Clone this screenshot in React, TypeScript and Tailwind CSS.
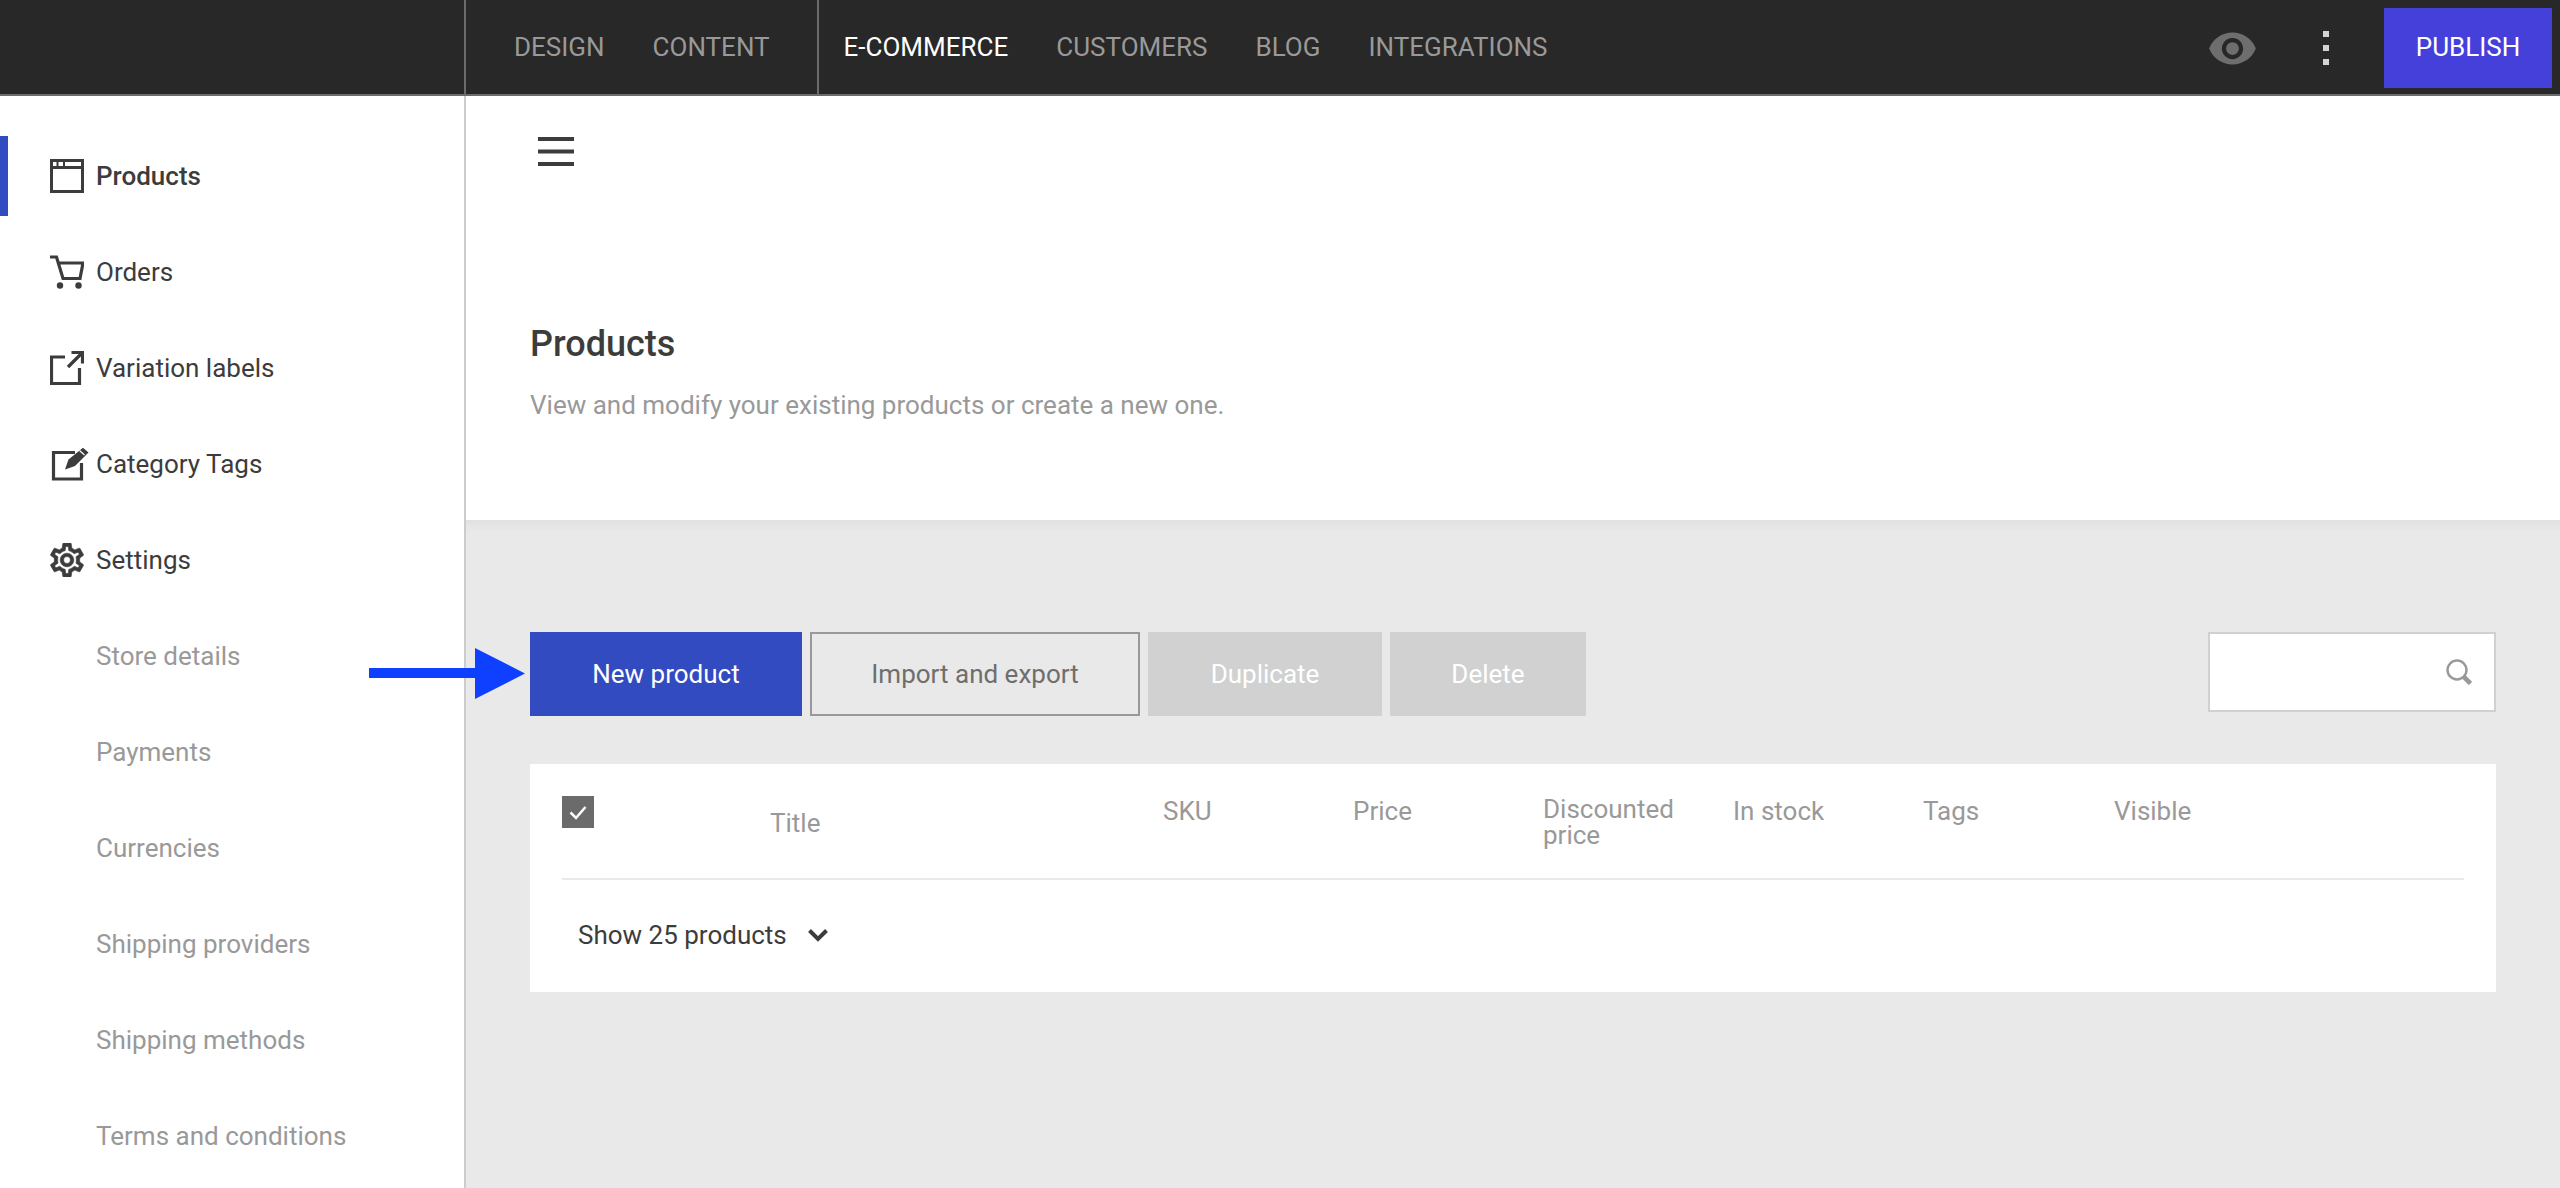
import type { ReactNode } from "react";

const WindowIcon = () => (
  <svg width="34" height="34" viewBox="0 0 34 34" fill="none" stroke="#3c3c3c" strokeWidth="3">
    <rect x="1.5" y="1.5" width="31" height="31" />
    <path d="M2 8.5h30" />
    <path d="M7.5 3v4M14 3v4" strokeWidth="2" />
  </svg>
);

const CartIcon = () => (
  <svg width="34" height="34" viewBox="0 0 34 34" fill="none" stroke="#3c3c3c" strokeWidth="3.2">
    <path d="M0 2h6.5L13 23.5h17L33 8H8.5" />
    <circle cx="10" cy="30.5" r="3.2" fill="#3c3c3c" stroke="none" />
    <circle cx="28.5" cy="30.5" r="3.2" fill="#3c3c3c" stroke="none" />
  </svg>
);

const ExternalIcon = () => (
  <svg width="34" height="34" viewBox="0 0 34 34" fill="none" stroke="#3c3c3c" strokeWidth="3.2">
    <path d="M15 6H1.5v26.5h28V17" />
    <path d="M18 16L32 2M21.5 1.5h11v11" />
  </svg>
);

const EditIcon = () => (
  <svg width="39" height="34" viewBox="-2 0 39 34" fill="none" stroke="#3c3c3c" strokeWidth="3.2">
    <path d="M23 5.5H1.5V32h28V16" />
    <polygon points="13,22.5 16.5,12.5 31,0.7 36.5,5.6 23,19" fill="#3c3c3c" stroke="none" />
    <path d="M27.5 3.5l5 4.5" stroke="#fff" strokeWidth="1.2" />
  </svg>
);

const GearIcon = () => (
  <svg width="34" height="34" viewBox="2 2 20 20" fill="#3c3c3c" stroke="#3c3c3c" strokeWidth="0.35">
    <path d="M19.43 12.98c.04-.32.07-.64.07-.98 0-.34-.03-.66-.07-.98l2.11-1.65c.19-.15.24-.42.12-.64l-2-3.46c-.09-.16-.26-.25-.44-.25-.06 0-.12.01-.17.03l-2.49 1c-.52-.4-1.08-.73-1.69-.98l-.38-2.65C14.46 2.18 14.25 2 14 2h-4c-.25 0-.46.18-.49.42l-.38 2.65c-.61.25-1.17.59-1.69.98l-2.49-1c-.06-.02-.12-.03-.18-.03-.17 0-.34.09-.43.25l-2 3.46c-.13.22-.07.49.12.64l2.11 1.65c-.04.32-.07.65-.07.98 0 .33.03.66.07.98l-2.11 1.65c-.19.15-.24.42-.12.64l2 3.46c.09.16.26.25.44.25.06 0 .12-.01.17-.03l2.49-1c.52.4 1.08.73 1.69.98l.38 2.65c.03.24.24.42.49.42h4c.25 0 .46-.18.49-.42l.38-2.65c.61-.25 1.17-.59 1.69-.98l2.49 1c.06.02.12.03.18.03.17 0 .34-.09.43-.25l2-3.46c.12-.22.07-.49-.12-.64l-2.11-1.65zm-1.98-1.71c.04.31.05.52.05.73 0 .21-.02.43-.05.73l-.14 1.13.89.7 1.08.84-.7 1.21-1.27-.51-1.04-.42-.9.68c-.43.32-.84.56-1.25.73l-1.06.43-.16 1.13-.2 1.35h-1.4l-.19-1.35-.16-1.13-1.06-.43c-.43-.18-.83-.41-1.23-.71l-.91-.7-1.06.43-1.27.51-.7-1.21 1.08-.84.89-.7-.14-1.13c-.03-.31-.05-.54-.05-.74s.02-.43.05-.73l.14-1.13-.89-.7-1.08-.84.7-1.21 1.27.51 1.04.42.9-.68c.43-.32.84-.56 1.25-.73l1.06-.43.16-1.13.2-1.35h1.39l.19 1.35.16 1.13 1.06.43c.43.18.83.41 1.23.71l.91.7 1.06-.43 1.27-.51.7 1.21-1.07.85-.89.7.14 1.13zM12 8c-2.21 0-4 1.79-4 4s1.79 4 4 4 4-1.79 4-4-1.79-4-4-4zm0 6c-1.1 0-2-.9-2-2s.9-2 2-2 2 .9 2 2-.9 2-2 2z" />
  </svg>
);

const mainLinks: { label: string; icon: ReactNode; active?: boolean }[] = [
  { label: "Products", icon: <WindowIcon />, active: true },
  { label: "Orders", icon: <CartIcon /> },
  { label: "Variation labels", icon: <ExternalIcon /> },
  { label: "Category Tags", icon: <EditIcon /> },
  { label: "Settings", icon: <GearIcon /> },
];

const subLinks = [
  "Store details",
  "Payments",
  "Currencies",
  "Shipping providers",
  "Shipping methods",
  "Terms and conditions",
];

function TopBar() {
  return (
    <header className="flex h-[96px] shrink-0 border-b-2 border-[#6b6b6b] bg-[#282828] text-[26px] leading-[36px] text-[#999999]">
      <div className="w-[466px] shrink-0 border-r-2 border-[#6b6b6b]" />
      <nav className="flex items-center gap-[48px] pr-[47px] pl-[48px]">
        <span>DESIGN</span>
        <span>CONTENT</span>
      </nav>
      <nav className="flex items-center gap-[48px] border-l-2 border-[#6b6b6b] pl-[25px]">
        <span className="text-white">E-COMMERCE</span>
        <span>CUSTOMERS</span>
        <span>BLOG</span>
        <span>INTEGRATIONS</span>
      </nav>
      <div className="ml-auto flex items-center pt-[2px] pr-[8px]">
        <svg width="51" height="51" viewBox="0 0 24 24" fill="#6e6e6e">
          <path d="M12 4.5C7 4.5 2.73 7.61 1 12c1.73 4.39 6 7.5 11 7.5s9.27-3.11 11-7.5c-1.73-4.39-6-7.5-11-7.5zM12 17c-2.76 0-5-2.24-5-5s2.24-5 5-5 5 2.24 5 5-2.24 5-5 5zm0-8c-1.66 0-3 1.34-3 3s1.34 3 3 3 3-1.34 3-3-1.34-3-3-3z" />
        </svg>
        <div className="mr-[55px] ml-[65px] flex flex-col gap-[8px]">
          <span className="h-[6px] w-[6px] bg-[#d4d4d4]" />
          <span className="h-[6px] w-[6px] bg-[#d4d4d4]" />
          <span className="h-[6px] w-[6px] bg-[#d4d4d4]" />
        </div>
        <button className="h-[80px] w-[168px] bg-[#4540da] pb-[2px] text-white">PUBLISH</button>
      </div>
    </header>
  );
}

function Sidebar() {
  return (
    <aside className="w-[466px] shrink-0 border-r-2 border-[#cccccc] bg-white pt-[40px] text-[26px] leading-[36px]">
      <ul className="flex flex-col gap-[16px]">
        {mainLinks.map((link) => (
          <li
            key={link.label}
            className={`flex h-[80px] items-center border-l-[8px] pl-[42px] ${
              link.active ? "border-[#334bc1] font-medium" : "border-transparent"
            } text-[#3c3c3c]`}
          >
            <span className="flex w-[46px] shrink-0">{link.icon}</span>
            {link.label}
          </li>
        ))}
        {subLinks.map((label) => (
          <li key={label} className="flex h-[80px] items-center pl-[96px] text-[#999999]">
            {label}
          </li>
        ))}
      </ul>
    </aside>
  );
}

function ProductTable() {
  return (
    <div className="mt-[48px] bg-white px-[32px] text-[26px] leading-[26px]">
      <div className="grid h-[116px] grid-cols-[208px_393px_190px_190px_190px_190px_191px_1fr] border-b-2 border-[#e9e9e9] pt-[32px] text-[#999999]">
        <div className="h-[32px] w-[32px] bg-[#6b6b6b]">
          <svg width="32" height="32" viewBox="0 0 32 32" fill="none" stroke="#fff" strokeWidth="2.5">
            <path d="M8.5 16.5l5.5 5.5 9.5-11" />
          </svg>
        </div>
        <div className="mt-[14px]">Title</div>
        <div className="mt-[2px]">SKU</div>
        <div className="mt-[2px]">Price</div>
        <div>
          Discounted
          <br />
          price
        </div>
        <div className="mt-[2px]">In stock</div>
        <div className="mt-[2px]">Tags</div>
        <div className="mt-[2px]">Visible</div>
      </div>
      <div className="flex h-[112px] items-center pb-[2px] pl-[16px] text-[#3c3c3c]">
        Show 25 products
        <svg className="ml-[21px]" width="20" height="14" viewBox="0 0 20 14" fill="none" stroke="#3c3c3c" strokeWidth="4">
          <path d="M1.5 2.5L10 11l8.5-8.5" />
        </svg>
      </div>
    </div>
  );
}

export default function App() {
  return (
    <div className="relative flex h-screen flex-col overflow-hidden bg-white font-['Roboto',sans-serif]">
      <TopBar />
      <div className="flex min-h-0 flex-1">
        <Sidebar />
        <main className="flex min-w-0 flex-1 flex-col bg-[#e9e9e9]">
          <section className="h-[424px] shrink-0 bg-white pt-[41px] pl-[64px]">
            <svg className="ml-[8px]" width="36" height="29" viewBox="0 0 36 29" fill="#3c3c3c">
              <rect y="0" width="36" height="4" />
              <rect y="12.5" width="36" height="4" />
              <rect y="25" width="36" height="4" />
            </svg>
            <h1 className="mt-[156px] text-[36px] leading-[44px] font-medium text-[#3c3c3c]">Products</h1>
            <p className="mt-[21px] text-[26px] leading-[36px] text-[#999999]">
              View and modify your existing products or create a new one.
            </p>
          </section>
          <div className="h-[12px] shrink-0 bg-gradient-to-b from-[#e1e1e1] to-[#e9e9e9]" />
          <section className="px-[64px] pt-[100px]">
            <div className="flex items-start gap-[8px] text-[26px] leading-[36px]">
              <button className="h-[84px] w-[272px] bg-[#334bc1] text-white">New product</button>
              <button className="h-[84px] w-[330px] border-2 border-[#999999] text-[#6e6e6e]">Import and export</button>
              <button className="h-[84px] w-[234px] bg-[#d1d1d1] text-white">Duplicate</button>
              <button className="h-[84px] w-[196px] bg-[#d1d1d1] text-white">Delete</button>
              <div className="ml-auto flex h-[80px] w-[288px] items-center justify-end border-2 border-[#d1d1d1] bg-white pr-[22px]">
                <svg width="26" height="26" viewBox="0 0 26 26" fill="none" stroke="#999999">
                  <circle cx="11" cy="11" r="9.5" strokeWidth="2.4" />
                  <path d="M18 18l6.5 6.5" strokeWidth="4.6" />
                </svg>
              </div>
            </div>
            <ProductTable />
          </section>
        </main>
      </div>
      <svg className="absolute top-[648px] left-[369px]" width="156" height="51" viewBox="0 0 156 51" fill="#1040ff">
        <path d="M0 20h106V0l50 25.5L106 51V30H0z" />
      </svg>
    </div>
  );
}
